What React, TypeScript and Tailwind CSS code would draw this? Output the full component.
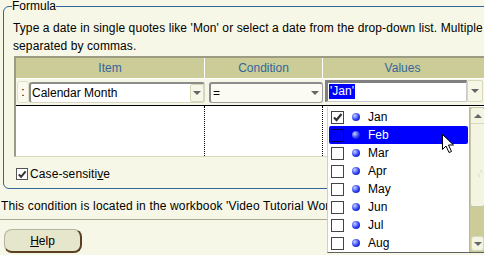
import React from 'react';

const months = ['Jan', 'Feb', 'Mar', 'Apr', 'May', 'Jun', 'Jul', 'Aug'];

const DownArrow = ({ color = '#666' }: { color?: string }) => (
  <svg width="8" height="4" viewBox="0 0 8 4">
    <path d="M0 0h8L4 4z" fill={color} />
  </svg>
);

const Tick = () => (
  <svg width="11" height="11" viewBox="0 0 11 11">
    <path d="M2 5.5l2.5 2.5L9.5 2" stroke="#333" strokeWidth="2.2" fill="none" />
  </svg>
);

const Ball = () => (
  <span className="w-[8px] h-[8px] rounded-full bg-[radial-gradient(circle_at_35%_35%,#c8d0ff,#2a3cf0_55%,#00008a)]" />
);

const App: React.FC = () => {
  return (
    <div className="relative w-[484px] h-[255px] overflow-hidden bg-[#f7f7e7] text-black font-['Liberation_Sans',Arial,sans-serif] text-[12px]">
      <fieldset className="ml-[3px] w-[520px] border border-[#336699] rounded-[6px] pl-[8px] pb-[7px]">
        <legend className="p-0 leading-[12px]">Formula</legend>

        <p className="pl-px pt-[7px] leading-[18px] whitespace-nowrap tracking-[0.1px]">
          Type a date in single quotes like 'Mon' or select a date from the drop-down list. Multiple
          <br />
          separated by commas.
        </p>

        {/* table */}
        <div className="ml-[2px] mt-px w-[480px] border-l-2 border-t-2 border-[#9c9c84] border-b border-b-[#d8d8bc]">
          <div className="flex h-[21px] bg-[#cccc99] border-b border-white text-[#336699]">
            <div className="w-[189px] border-r border-white flex items-center justify-center">Item</div>
            <div className="w-[118px] border-r border-white flex items-center justify-center">Condition</div>
            <div className="w-[159px] flex items-center justify-center">Values</div>
          </div>

          <div className="flex items-center h-[27px] border-b border-black">
            <div className="ml-px w-[12px] h-[22px] flex items-center justify-center rounded-[3px] border border-[#e0e0c8] bg-[#fafaf0]">:</div>
            <div className="flex h-[21px] w-[176px] rounded-[3px] border-l-2 border-t-2 border-[#8c8c8c] border-r border-b border-r-[#d4d4c0] border-b-[#d4d4c0] bg-white">
              <div className="flex-1 pl-[1px] leading-[18px]">Calendar Month</div>
              <div className="w-[14px] flex items-center justify-center bg-[#f7f7e7] border border-[#d8d8b8] rounded-[2px]">
                <DownArrow />
              </div>
            </div>
            <div className="ml-[4px] flex items-center h-[21px] w-[114px] rounded-[3px] border-l-2 border-t-2 border-[#8c8c8c] border-r border-b border-r-[#9c9c9c] border-b-[#9c9c9c] bg-[#fbfbf4]">
              <div className="flex-1 pl-[2px] leading-[18px]">=</div>
              <div className="w-[14px] flex items-center justify-center">
                <DownArrow />
              </div>
            </div>
            <div className="ml-[2px] flex h-[22px] -mt-[3px] w-[158px]">
              <div className="flex-1 flex items-center border-l-[3px] border-t-[3px] border-[#808080] border-r border-b border-r-[#c8c8c8] border-b-[#c8c8c8] bg-white pl-[1px]">
                <span className="bg-[#0000ff] text-white leading-[15px] px-px">'Jan'</span>
              </div>
              <div className="w-[16px] flex items-center justify-center bg-[#f7f7e7] border border-[#d8d8b8] rounded-[2px]">
                <DownArrow />
              </div>
            </div>
          </div>

          <div className="flex h-[50px] bg-white">
            <div className="w-[189px] border-r border-dotted border-black" />
            <div className="w-[118px] border-r border-dotted border-black" />
            <div className="flex-1" />
          </div>
        </div>

        <label className="ml-[4px] mt-[10px] flex items-center gap-[2px] leading-[14px]">
          <span className="w-[12px] h-[12px] border border-[#555] bg-white flex items-center justify-center">
            <Tick />
          </span>
          <span className="tracking-[0.1px]">
            Case-sensiti<span className="underline">v</span>e
          </span>
        </label>
      </fieldset>

      <p className="mt-[8px] pl-px leading-[18px] whitespace-nowrap tracking-[0.15px]">
        This condition is located in the workbook 'Video Tutorial Workbook'.
      </p>

      <div className="mt-[4px] h-px w-full bg-[#a8a890]" />

      <button className="ml-[4px] mt-[9px] w-[78px] h-[24px] rounded-[8px] bg-[#e6e6cc] border border-[#b4b4a4] border-r-2 border-b-2 border-r-[#5a4020] border-b-[#5a4020] text-[12px]">
        <span className="underline">H</span>elp
      </button>

      {/* values drop-down list */}
      <div className="absolute left-[327px] top-[107px] w-[158px] h-[146px] flex bg-white border-l border-[#d0d0c0] border-b border-b-[#606060]">
        <div className="flex-1 flex flex-col pt-px">
          {months.map((m, i) => {
            const active = i === 1;
            return (
              <div
                key={m}
                className={`mx-px h-[18px] flex items-center pl-[2px] rounded-[2px] ${active ? 'bg-[#0000ff] text-white' : ''}`}
              >
                <span
                  className={`w-[13px] h-[13px] flex items-center justify-center border ${
                    active ? 'border-[#00005a]' : 'border-[#444] bg-white'
                  }`}
                >
                  {m === 'Jan' && <Tick />}
                </span>
                <span className="ml-[8px] flex">
                  <Ball />
                </span>
                <span className="ml-[8px] leading-[14px]">{m}</span>
              </div>
            );
          })}
        </div>
        <div className="w-[16px] flex flex-col bg-[#cccc99] border-l border-[#b8b890]">
          <div className="h-[100px] flex flex-col bg-[#f4f4e2] border border-[#c8c8a8] rounded-[3px]">
            <div className="h-[16px] flex items-center justify-center border-b border-[#d8d8c0]">
              <svg width="8" height="4" viewBox="0 0 8 4">
                <path d="M4 0l4 4H0z" fill="#666" />
              </svg>
            </div>
            <div className="flex-1 flex items-end justify-end pr-[2px] pb-[28px]">
              <svg width="6" height="8" viewBox="0 0 6 8">
                <path d="M4 0h1M5 2h1M2 4h1M3 6h1" stroke="#c8c8a0" />
              </svg>
            </div>
          </div>
          <div className="flex-1" />
          <div className="h-[15px] mb-px mx-px flex items-center justify-center bg-[#f4f4e2] rounded-[3px] border border-[#d8d8c0]">
            <DownArrow />
          </div>
        </div>
      </div>

      {/* mouse pointer */}
      <svg className="absolute left-[442px] top-[134px]" width="13" height="20" viewBox="0 0 13 20">
        <path d="M0.5 0.5v15l3.5-3.5 3 6.5 2.5-1-3-6.5h5z" fill="white" stroke="black" strokeWidth="1" />
      </svg>
    </div>
  );
};

export default App;
